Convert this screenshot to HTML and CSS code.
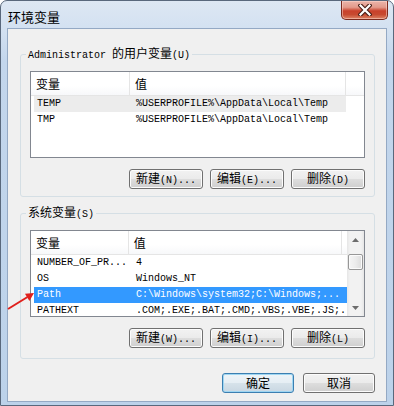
FILE: index.html
```html
<!DOCTYPE html>
<html>
<head>
<meta charset="utf-8">
<link rel="stylesheet" href="styles.css">
</head>
<body>
<div class="window">
  <div class="titlebar">
    <span class="title">环境变量</span>
    <div class="close">
      <svg width="14" height="12" viewBox="0 0 14 12"><path d="M2.5 1.5 L11.5 10.5 M11.5 1.5 L2.5 10.5" stroke="#4a2018" stroke-width="4.4" stroke-linecap="square" fill="none"/><path d="M2.5 1.5 L11.5 10.5 M11.5 1.5 L2.5 10.5" stroke="#fff" stroke-width="2.2" stroke-linecap="square" fill="none"/></svg>
    </div>
  </div>
  <div class="client">
    <fieldset class="group">
      <legend><span class="a">Administrator </span>的用户变量<span class="a">(U)</span></legend>
      <div class="lv">
        <div class="lv-main">
          <div class="lv-head"><div class="h c1">变量</div><div class="h c2">值</div><div class="h hfill"></div></div>
          <div class="row inactive"><div class="cell c1">TEMP</div><div class="cell c2">%USERPROFILE%\AppData\Local\Temp</div></div>
          <div class="row"><div class="cell c1">TMP</div><div class="cell c2">%USERPROFILE%\AppData\Local\Temp</div></div>
        </div>
      </div>
      <div class="btns">
        <button class="btn">新建<span class="a">(N)...</span></button>
        <button class="btn">编辑<span class="a">(E)...</span></button>
        <button class="btn">删除<span class="a">(D)</span></button>
      </div>
    </fieldset>
    <fieldset class="group group2">
      <legend>系统变量<span class="a">(S)</span></legend>
      <div class="lv">
        <div class="lv-main">
          <div class="lv-head"><div class="h c1">变量</div><div class="h c2">值</div><div class="h hfill"></div></div>
          <div class="row"><div class="cell c1">NUMBER_OF_PR...</div><div class="cell c2">4</div></div>
          <div class="row"><div class="cell c1">OS</div><div class="cell c2">Windows_NT</div></div>
          <div class="row sel"><div class="cell c1">Path</div><div class="cell c2">C:\Windows\system32;C:\Windows;...</div></div>
          <div class="row"><div class="cell c1">PATHEXT</div><div class="cell c2">.COM;.EXE;.BAT;.CMD;.VBS;.VBE;.JS;...</div></div>
        </div>
        <div class="vscroll">
          <div class="sb-btn"><svg width="7" height="4" viewBox="0 0 7 4"><path d="M0 4 L3.5 0 L7 4 Z" fill="#6d6d6d"/></svg></div>
          <div class="sb-track-top"></div>
          <div class="sb-thumb"></div>
          <div class="sb-track"></div>
          <div class="sb-btn"><svg width="7" height="4" viewBox="0 0 7 4"><path d="M0 0 L3.5 4 L7 0 Z" fill="#6d6d6d"/></svg></div>
        </div>
      </div>
      <div class="btns">
        <button class="btn">新建<span class="a">(W)...</span></button>
        <button class="btn">编辑<span class="a">(I)...</span></button>
        <button class="btn">删除<span class="a">(L)</span></button>
      </div>
    </fieldset>
    <div class="footer">
      <button class="btn btn-wide default">确定</button>
      <button class="btn btn-wide">取消</button>
    </div>
  </div>
  <svg class="arrow" width="40" height="30" viewBox="0 0 40 30"><path d="M8 24 L27.5 12" stroke="#e0201c" stroke-width="2" fill="none"/><path d="M34 8 L25 8.8 L29.4 16 Z" fill="#e0201c"/></svg>
</div>
</body>
</html>
```
FILE: styles.css
```css
* { box-sizing: border-box; }
html, body { margin: 0; padding: 0; background: #fff; }
body {
  width: 394px;
  height: 406px;
  overflow: hidden;
  font-family: "Noto Sans CJK SC", sans-serif;
  font-size: 12px;
  color: #000;
}
.a { font-family: "Liberation Mono", monospace; font-size: 10px; }

.window {
  position: relative;
  width: 394px;
  height: 406px;
  border: 1px solid #59687c;
  border-radius: 7px 7px 0 0;
  background: linear-gradient(180deg, #dde7f3 0px, #d3e1f1 28px, #c3d6ec 60px, #bcd2ea 100%);
  padding: 0 6px 3px 6px;
  display: flex;
  flex-direction: column;
}
.titlebar {
  height: 27px;
  display: flex;
  justify-content: space-between;
  align-items: flex-start;
}
.title {
  padding: 8px 0 0 1px;
  font-size: 13px;
  line-height: 15px;
}
.close {
  width: 47px;
  height: 19px;
  margin-right: -1px;
  border: 1px solid #7b2a1e;
  border-top: none;
  border-radius: 0 0 5px 5px;
  background: linear-gradient(180deg, #ebb5aa 0%, #e39a8b 35%, #c9412b 55%, #c74a30 75%, #dd8466 100%);
  box-shadow: inset 0 0 0 1px rgba(255, 220, 210, 0.5);
  display: flex;
  align-items: center;
  justify-content: center;
}
.client {
  flex: 1;
  background: #f0f0f0;
  border: 1px solid #94a9c4;
  padding: 17px 11px 0 12px;
  display: flex;
  flex-direction: column;
}
.group {
  margin: 0;
  padding: 8px 9px 7px 9px;
  border: 1px solid #d5dfe5;
  border-radius: 3px;
  min-width: 0;
}
.group2 { margin-top: 8px; padding-bottom: 10px; }
.group legend {
  padding: 0 2px;
  margin-left: -4px;
  line-height: 14px;
  font-size: 12px;
}
.lv {
  height: 87px;
  border: 1px solid #828790;
  background: #fff;
  display: flex;
  overflow: hidden;
}
.lv-main { flex: 1; min-width: 0; overflow: hidden; }
.lv-head {
  display: flex;
  height: 24px;
  border-bottom: 1px solid #e5e5e5;
  background: linear-gradient(180deg, #ffffff 0%, #ffffff 60%, #f7f8fa 100%);
}
.h {
  line-height: 23px;
  padding-left: 5px;
  border-right: 1px solid #e5e5e5;
  font-size: 12px;
}
.h.c1 { width: 99px; }
.h.c2 { width: 216px; }
.hfill { flex: 1; border-right: none; }
.row {
  display: flex;
  height: 16px;
  line-height: 16px;
  margin-left: 3px;
  width: 312px;
  font-family: "Liberation Mono", monospace;
  font-size: 10px;
  white-space: nowrap;
}
.cell { overflow: hidden; }
.row .c1 { width: 96px; padding-left: 3px; }
.row .c2 { flex: 1; padding-left: 6px; }
.row.inactive { background: #ececec; }
.row.sel { background: #3399ff; color: #fff; width: 313px; }

.vscroll {
  width: 17px;
  display: flex;
  flex-direction: column;
  background: linear-gradient(90deg, #e6e6e6 0, #f2f2f2 3px, #f2f2f2 14px, #e6e6e6 100%);
}
.sb-btn {
  height: 17px;
  display: flex;
  align-items: center;
  justify-content: center;
}
.sb-track-top { height: 6px; }
.sb-thumb {
  height: 16px;
  margin: 0 1px;
  border: 1px solid #979797;
  border-radius: 2px;
  background: linear-gradient(90deg, #f5f5f5 0%, #ececec 50%, #dcdcdc 100%);
  box-shadow: inset 0 0 0 1px #fbfbfb;
}
.sb-track { flex: 1; }

.btns {
  margin-top: 11px;
  display: flex;
  justify-content: flex-end;
  gap: 7px;
}
.btn {
  width: 74px;
  height: 20px;
  margin: 0;
  padding: 0;
  border: 1px solid #707070;
  border-radius: 3px;
  background: linear-gradient(180deg, #f2f2f2 0%, #ebebeb 48%, #dddddd 52%, #cfcfcf 100%);
  box-shadow: inset 0 0 0 1px #fcfcfc;
  font-family: "Noto Sans CJK SC", sans-serif;
  font-size: 12px;
  line-height: 16px;
  color: #000;
}
.footer {
  margin-top: 14px;
  display: flex;
  justify-content: flex-end;
  gap: 9px;
}
.btn-wide { width: 72px; }
.btn.default {
  border-color: #3c7fb1;
  box-shadow: inset 0 0 0 1px #9fd6f2;
  background: linear-gradient(180deg, #eef4f8 0%, #e6eef4 48%, #d6e2ea 52%, #c9d7e2 100%);
}
.arrow {
  position: absolute;
  left: -1px;
  top: 284px;
}
```
